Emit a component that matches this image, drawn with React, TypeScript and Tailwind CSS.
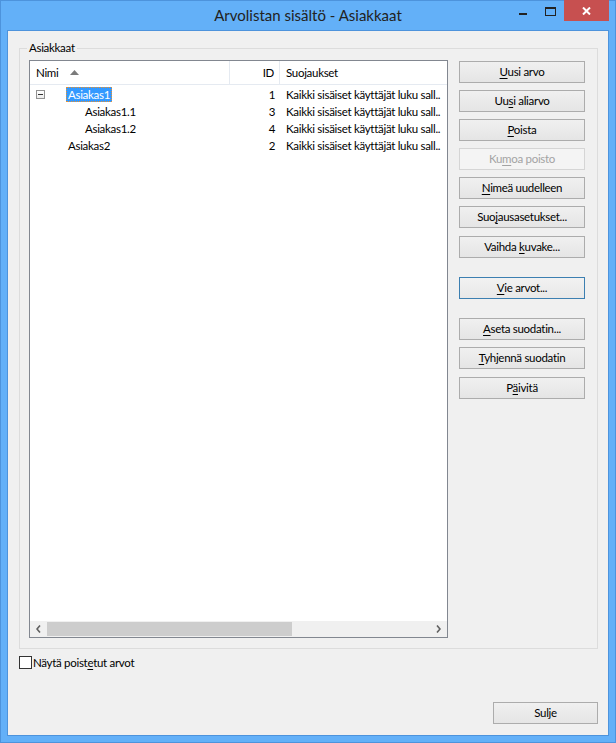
import * as React from "react"

// Win8-style "Arvolistan sisältö" dialog: tree list + command button column.

type Row = {
  name: string
  id: number
  level: 0 | 1
  expander?: boolean
  selected?: boolean
}

const ROWS: Row[] = [
  { name: "Asiakas1", id: 1, level: 0, expander: true, selected: true },
  { name: "Asiakas1.1", id: 3, level: 1 },
  { name: "Asiakas1.2", id: 4, level: 1 },
  { name: "Asiakas2", id: 2, level: 0 },
]

const RIGHTS = "Kaikki sisäiset käyttäjät luku sall.."

// "&" marks the mnemonic letter, same as a WinForms caption.
function Mnemonic({ text }: { text: string }) {
  const i = text.indexOf("&")
  if (i < 0) return <span>{text}</span>
  return (
    <span className="whitespace-pre">
      {text.slice(0, i)}
      <u className="underline-offset-[2px]">{text[i + 1]}</u>
      {text.slice(i + 2)}
    </span>
  )
}

function Btn({
  label,
  disabled,
  primary,
  className = "",
}: {
  label: string
  disabled?: boolean
  primary?: boolean
  className?: string
}) {
  const tone = disabled
    ? "border-[#d5d5d5] bg-[#f4f4f4] text-[#a3a3a3]"
    : primary
      ? "border-[#3c7fb1] bg-linear-to-b from-[#f2f2f2] to-[#e8e8e8] text-black"
      : "border-[#acacac] bg-linear-to-b from-[#f0f0f0] to-[#e5e5e5] text-black"
  return (
    <button
      type="button"
      disabled={disabled}
      className={`flex h-[22px] items-center justify-center border text-[11.5px] leading-none tracking-[-0.3px] ${tone} ${className}`}
    >
      <Mnemonic text={label} />
    </button>
  )
}

function TitleBar() {
  return (
    <div className="grid h-[29px] grid-cols-[1fr_auto_1fr]">
      <div />
      <div className="pt-[4px] text-[15px] leading-[20px] text-[#222222]">
        Arvolistan sisältö - Asiakkaat
      </div>
      <div className="flex items-start justify-end pr-[6px]">
        {/* minimize */}
        <div className="mt-[12px] mr-[18px] h-[2px] w-[8px] bg-[#222222]" />
        {/* maximize */}
        <div className="mt-[6px] mr-[8px] h-[9px] w-[11px] border border-t-2 border-[#222222]" />
        {/* close */}
        <div className="-mt-px flex h-[21px] w-[45px] items-center justify-center bg-[#c75050]">
          <svg width="9" height="8" viewBox="0 0 9 8">
            <path d="M1 0.5 L8 7.5 M8 0.5 L1 7.5" stroke="#fff" strokeWidth="2" />
          </svg>
        </div>
      </div>
    </div>
  )
}

function ListHeader() {
  return (
    <div className="grid h-[24px] grid-cols-[200px_50px_1fr] border-b border-[#e5eaf1] bg-white">
      <div className="flex items-center border-r border-[#e5eaf1] pl-[6px]">
        <span>Nimi</span>
        <svg className="ml-[12px]" width="9" height="5" viewBox="0 0 9 5">
          <path d="M0 5 L4.5 0 L9 5 Z" fill="#7b7b7b" />
        </svg>
      </div>
      <div className="flex items-center justify-end border-r border-[#e5eaf1] pr-[5px]">ID</div>
      <div className="flex items-center pl-[6px]">Suojaukset</div>
    </div>
  )
}

function TreeRow({ row }: { row: Row }) {
  const nameTone = row.selected
    ? "border-dotted border-[#e8902f] bg-[#3399ff] text-white"
    : "border-transparent"
  return (
    <div className="grid h-[17px] grid-cols-[200px_50px_1fr] leading-[13px]">
      <div className="flex items-center pl-[6px]">
        <div className="flex w-[9px] items-center">
          {row.expander && (
            <div className="flex h-[9px] w-[9px] items-center justify-center border border-[#919191] bg-linear-to-b from-white to-[#ececec]">
              <div className="h-px w-[5px] bg-[#333333]" />
            </div>
          )}
        </div>
        <span
          className={`h-[15px] border px-[1px] ${nameTone} ${row.level === 0 ? "ml-[21px]" : "ml-[38px]"}`}
        >
          {row.name}
        </span>
      </div>
      <div className="flex items-center justify-end pr-[5px]">{row.id}</div>
      <div className="flex items-center overflow-hidden whitespace-nowrap pl-[6px]">{RIGHTS}</div>
    </div>
  )
}

function HScrollBar() {
  return (
    <div className="flex h-[16px] items-stretch bg-[#f0f0f0]">
      <div className="flex w-[17px] items-center justify-center">
        <svg width="5" height="8" viewBox="0 0 5 8">
          <path d="M4 0.5 L1 4 L4 7.5" stroke="#606060" strokeWidth="1.6" fill="none" />
        </svg>
      </div>
      <div className="flex flex-1 items-stretch py-px">
        <div className="w-[245px] bg-[#cdcdcd]" />
      </div>
      <div className="flex w-[17px] items-center justify-center">
        <svg width="5" height="8" viewBox="0 0 5 8">
          <path d="M1 0.5 L4 4 L1 7.5" stroke="#606060" strokeWidth="1.6" fill="none" />
        </svg>
      </div>
    </div>
  )
}

export default function App() {
  return (
    <div className="flex h-[743px] w-[616px] flex-col border border-[#4d93dc] bg-[#63b0f8] font-['Lato','Noto_Sans',sans-serif] text-black">
      <TitleBar />

      <div className="mx-[6px] flex h-[706px] flex-col border border-[#4d93dc] bg-[#f0f0f0] text-[11.5px] tracking-[-0.3px]">
        {/* group box */}
        <div className="relative ml-[11px] mt-[17px] h-[601px] w-[579px] border border-[#dcdcdc]">
          <span className="absolute -top-[9px] left-[7px] bg-[#f0f0f0] px-[2px] leading-[16px]">
            Asiakkaat
          </span>

          <div className="flex items-start gap-[11px] pl-[9px] pt-[11px]">
            <div className="flex h-[578px] w-[419px] flex-col border border-[#828790] bg-white">
              <ListHeader />
              <div className="flex-1 pt-[1px]">
                {ROWS.map(r => (
                  <TreeRow key={r.name} row={r} />
                ))}
              </div>
              <HScrollBar />
            </div>

            <div className="mt-px flex w-[126px] flex-col">
              <Btn label="&Uusi arvo" />
              <Btn label="Uu&si aliarvo" className="mt-[7px]" />
              <Btn label="&Poista" className="mt-[7px]" />
              <Btn label="Ku&moa poisto" disabled className="mt-[7px]" />
              <Btn label="&Nimeä uudelleen" className="mt-[7px]" />
              <Btn label="Suo&jausasetukset..." className="mt-[7px]" />
              <Btn label="Vaihda &kuvake..." className="mt-[8px]" />
              <Btn label="&Vie arvot..." primary className="mt-[19px]" />
              <Btn label="&Aseta suodatin..." className="mt-[19px]" />
              <Btn label="&Tyhjennä suodatin" className="mt-[7px]" />
              <Btn label="P&äivitä" className="mt-[8px]" />
            </div>
          </div>
        </div>

        {/* show deleted */}
        <label className="ml-[11px] mt-[7px] flex items-center leading-[13px]">
          <span className="h-[13px] w-[13px] border border-[#333333] bg-white" />
          <span className="ml-px">
            <Mnemonic text="Näytä poist&etut arvot" />
          </span>
        </label>

        <div className="flex flex-1 items-end justify-end pb-[11px] pr-[10px]">
          <Btn label="Sulje" className="w-[105px]" />
        </div>
      </div>
    </div>
  )
}
